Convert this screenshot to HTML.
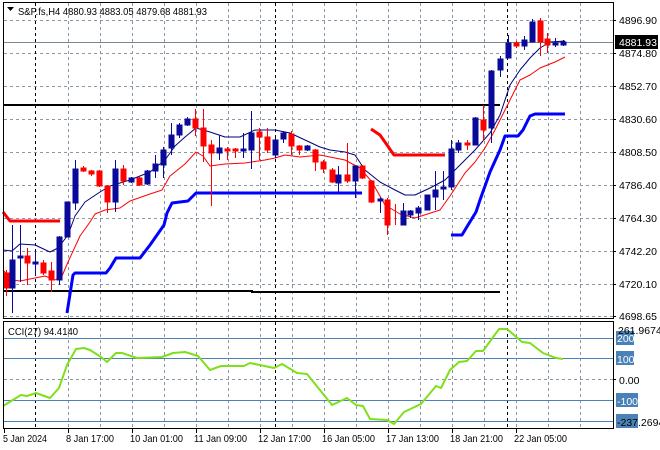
<!DOCTYPE html>
<html><head><meta charset="utf-8"><style>
html,body{margin:0;padding:0;background:#fff;}
svg{display:block;font-family:"Liberation Sans",sans-serif;font-size:10.5px;}
</style></head><body>
<svg width="660" height="450" viewBox="0 0 660 450" xmlns="http://www.w3.org/2000/svg">
<rect width="660" height="450" fill="#fff"/>
<g stroke="#8a96a3" stroke-width="1" stroke-dasharray="3,3" fill="none">
<path d="M4 20.5H613M4 53.5H613M4 86.5H613M4 119.5H613M4 152.5H613M4 185.5H613M4 218.5H613M4 251.5H613M4 284.5H613M4 316.5H613"/>
<path d="M4 379.5H613"/>
<path d="M68.5 3V318M100.5 3V318M132.5 3V318M164.5 3V318M196.5 3V318M228.5 3V318M260.5 3V318M292.5 3V318M324.5 3V318M356.5 3V318M388.5 3V318M420.5 3V318M452.5 3V318M484.5 3V318M516.5 3V318M548.5 3V318M580.5 3V318"/>
<path d="M68.5 322V428M100.5 322V428M132.5 322V428M164.5 322V428M196.5 322V428M228.5 322V428M260.5 322V428M292.5 322V428M324.5 322V428M356.5 322V428M388.5 322V428M420.5 322V428M452.5 322V428M484.5 322V428M516.5 322V428M548.5 322V428M580.5 322V428"/>
</g>
<g stroke="#000" stroke-width="1" stroke-dasharray="3,3">
<path d="M35.5 3V318M275.5 3V318M507.5 3V318M35.5 322V428M275.5 322V428M507.5 322V428"/>
</g>
<path d="M4 42.5H613" stroke="#7a8794" stroke-width="1"/>
<path d="M3 105H500" stroke="#000" stroke-width="2"/>
<path d="M3 291H252V292H500" stroke="#000" stroke-width="2" fill="none"/>
<g fill="none" stroke-linejoin="round">
<polyline stroke="#ff0000" stroke-width="3" points="3,212 10,221 60,221"/>
<polyline stroke="#ff0000" stroke-width="3" points="371,129 380,135 394,155 445,155"/>
<polyline stroke="#0000ff" stroke-width="3" points="67,313 73,275 75,273 106,273 110,268 116,258 140,258 150,245 164,225 167,213 172,203 188,201 196,193 362,193"/>
<polyline stroke="#0000ff" stroke-width="3" points="451,235 462,235 468,225 476,212 480,200 490,172 500,150 505,136 518,136 523,130 530,116 535,114 565,114"/>
<polyline stroke="#ff0000" stroke-width="1" points="3,270 12,280 20,281 35,278 45,276 55,280 62,276 68,262 80,236 90,222 95,214 105,210 120,208 130,201 150,194 162,190 170,176 185,164 196,152 203,156 210,166 225,164 245,163 265,160 275,158 285,155 300,157 320,155 345,160 360,168 372,182 385,205 400,214 415,218 440,210 450,196 465,173 475,162 485,148 495,130 505,110 510,100 520,80 530,75 540,68 555,62 565,57"/>
<polyline stroke="#000080" stroke-width="1" points="3,250 12,251 20,244 35,245 50,252 58,248 68,235 75,216 85,202 100,192 110,186 130,180 150,172 165,160 175,146 185,137 196,128 210,132 225,137 240,137 255,130 275,130 290,133 305,140 320,147 330,150 345,152 355,155 365,170 380,182 395,190 405,195 415,195 430,188 445,180 460,165 475,150 490,133 500,115 510,85 520,70 530,58 540,48 550,42 565,41"/>
</g>
<g stroke-width="1">
<g stroke="#ff0000" fill="#ff0000">
<path d="M6.5 270V296M27.5 248V285M43.5 260V275M51.5 262V292M83.5 166V172M91.5 170V176M99.5 170V187M107.5 185V213M123.5 165V185M139.5 177V186M195.5 109V136M203.5 109V162M211.5 140V206M227.5 147V160M235.5 148V158M259.5 128V160M267.5 128V153M291.5 131V155M299.5 145V155M315.5 149V171M323.5 160V173M332.5 168V183M347.5 143V183M362.5 165V179M371.5 180V203M387.5 198V235M395.5 204V225M467.5 140V150M483.5 105V141M516.5 41V48M540.5 18V56M547.5 33V53"/>
<rect x="4" y="273" width="5" height="15"/><rect x="25" y="256" width="5" height="7"/><rect x="41" y="263" width="5" height="10"/><rect x="49" y="271" width="5" height="9"/>
<rect x="81" y="168" width="5" height="3"/><rect x="89" y="171" width="5" height="3"/><rect x="97" y="171" width="5" height="15"/><rect x="105" y="186" width="5" height="16"/><rect x="121" y="169" width="5" height="12"/><rect x="137" y="178" width="5" height="7"/>
<rect x="193" y="119" width="5" height="9"/><rect x="201" y="128" width="5" height="18"/><rect x="209" y="145" width="5" height="8"/><rect x="225" y="149" width="5" height="2"/><rect x="233" y="149" width="5" height="2"/><rect x="257" y="132" width="5" height="5"/><rect x="265" y="137" width="5" height="13"/><rect x="289" y="134" width="5" height="12"/><rect x="297" y="146" width="5" height="4"/><rect x="313" y="150" width="5" height="12"/><rect x="321" y="162" width="5" height="7"/><rect x="330" y="170" width="5" height="12"/><rect x="345" y="175" width="5" height="6"/><rect x="360" y="166" width="5" height="12"/><rect x="369" y="181" width="5" height="21"/><rect x="385" y="200" width="5" height="25"/><rect x="465" y="143" width="5" height="2"/><rect x="481" y="120" width="5" height="10"/><rect x="514" y="43" width="5" height="3"/><rect x="538" y="21" width="5" height="21"/><rect x="545" y="39" width="5" height="6"/>
</g>
<g stroke="#0a0a9a" fill="#0a0a9a">
<path d="M12.5 225V313M20.5 225V282M35.5 250V275M59.5 236V285M75.5 160V210M115.5 160V212M131.5 177V183M147.5 170V185M155.5 155V178M163.5 147V178M171.5 123V155M179.5 123V138M187.5 117V126M219.5 135V160M243.5 133V158M251.5 111V169M275.5 138V158M283.5 131V143M307.5 145V151M338.5 166V192M355.5 166V198M380.5 197V213M403.5 203V225M410.5 210V218M418.5 206V220M427.5 195V210M435.5 171V210M443.5 171V200M451.5 140V190M458.5 140V153M475.5 117V145M491.5 70V143M500.5 56V77M508.5 35V58M524.5 36V50M532.5 19V42M555.5 38V47M563.5 40V46"/>
<rect x="10" y="260" width="5" height="28"/><rect x="18" y="256" width="5" height="2"/><rect x="33" y="262" width="5" height="2"/><rect x="57" y="237" width="5" height="43"/><rect x="65" y="202" width="5" height="35"/><rect x="73" y="169" width="5" height="34"/>
<rect x="113" y="169" width="5" height="33"/><rect x="129" y="178" width="5" height="4"/><rect x="145" y="171" width="5" height="13"/><rect x="153" y="164" width="5" height="7"/><rect x="161" y="150" width="5" height="15"/><rect x="169" y="135" width="5" height="13"/><rect x="177" y="125" width="5" height="10"/><rect x="185" y="119" width="5" height="6"/><rect x="217" y="148" width="5" height="5"/><rect x="241" y="149" width="5" height="2"/><rect x="249" y="133" width="5" height="17"/><rect x="273" y="140" width="5" height="15"/><rect x="281" y="133" width="5" height="6"/><rect x="305" y="146" width="5" height="4"/><rect x="336" y="175" width="5" height="8"/><rect x="353" y="166" width="5" height="15"/><rect x="378" y="199" width="5" height="2"/><rect x="401" y="211" width="5" height="14"/><rect x="408" y="211" width="5" height="4"/><rect x="416" y="208" width="5" height="5"/><rect x="425" y="195" width="5" height="15"/><rect x="433" y="190" width="5" height="7"/><rect x="441" y="187" width="5" height="2"/><rect x="449" y="149" width="5" height="38"/><rect x="456" y="143" width="5" height="7"/><rect x="473" y="118" width="5" height="27"/><rect x="489" y="71" width="5" height="57"/><rect x="498" y="59" width="5" height="11"/><rect x="506" y="43" width="5" height="15"/><rect x="522" y="40" width="5" height="6"/><rect x="530" y="22" width="5" height="20"/><rect x="553" y="43" width="5" height="2"/><rect x="561" y="42" width="5" height="3"/>
</g>
</g>
<g stroke="#4a82b8" stroke-width="1">
<path d="M4 338.5H613M4 358.5H613M4 400.5H613M4 421.5H613"/>
</g>
<polyline fill="none" stroke="#7fe01a" stroke-width="2" stroke-linejoin="round" points="3,406 21,395 27,396 36,393 50,398 59,388 67,365 76,349 84,348 90,350 101,357 107,362 116,353 122,353 137,358 162,357 173,353 185,352 198,356 210,370 221,366 244,366 250,363 274,368 282,364 297,373 307,374 332,405 347,398 356,405 363,406 370,419 387,420 394,424 404,412 421,404 436,386 441,388 450,370 459,362 467,361 476,351 483,351 499,329 507,329 522,342 530,343 543,353 556,358 563,359"/>
<g fill="none" stroke="#000" stroke-width="1">
<rect x="3.5" y="2.5" width="610" height="316"/>
<rect x="3.5" y="321.5" width="610" height="107"/>
</g>
<g stroke="#000"><path d="M613 20.5h3M613 53.5h3M613 86.5h3M613 119.5h3M613 152.5h3M613 185.5h3M613 218.5h3M613 251.5h3M613 284.5h3M613 316.5h3M613 379.5h3M4.5 429v4M68.5 429v4M132.5 429v4M196.5 429v4M260.5 429v4M324.5 429v4M388.5 429v4M452.5 429v4M516.5 429v4"/></g>
<path d="M7 7h7l-3.5 4z" fill="#000"/>
<text x="18" y="15" fill="#000" textLength="189" lengthAdjust="spacingAndGlyphs">S&amp;P.fs,H4  4880.93 4883.05 4879.68 4881.93</text>
<text x="8" y="335" fill="#000" textLength="70" lengthAdjust="spacingAndGlyphs">CCI(27) 94.4140</text>
<g fill="#000">
<text x="619" y="24">4896.90</text>
<text x="619" y="57">4874.80</text>
<text x="619" y="90">4852.70</text>
<text x="619" y="123">4830.60</text>
<text x="619" y="156">4808.50</text>
<text x="619" y="189">4786.40</text>
<text x="619" y="222">4764.30</text>
<text x="619" y="255">4742.20</text>
<text x="619" y="288">4720.10</text>
<text x="619" y="320">4698.65</text>
</g>
<rect x="615" y="35" width="43" height="14" fill="#000"/>
<text x="619" y="46" fill="#fff">4881.93</text>
<g fill="#4a82b8">
<rect x="616" y="331" width="18" height="14"/>
<rect x="616" y="351" width="18" height="14"/>
<rect x="616" y="393" width="22" height="14"/>
<rect x="616" y="414" width="22" height="14"/>
</g>
<text x="618" y="334" fill="#000">261.9674</text>
<g fill="#fff">
<text x="617" y="342">200</text>
<text x="617" y="363">100</text>
<text x="617" y="405">-100</text>
</g>
<text x="619" y="384" fill="#000">0.00</text>
<text x="617" y="426" fill="#000">-237.2694</text>
<g fill="#000">
<text x="3" y="442" textLength="44" lengthAdjust="spacingAndGlyphs">5 Jan 2024</text>
<text x="66" y="442" textLength="48" lengthAdjust="spacingAndGlyphs">8 Jan 17:00</text>
<text x="130" y="442" textLength="53" lengthAdjust="spacingAndGlyphs">10 Jan 01:00</text>
<text x="194" y="442" textLength="53" lengthAdjust="spacingAndGlyphs">11 Jan 09:00</text>
<text x="258" y="442" textLength="53" lengthAdjust="spacingAndGlyphs">12 Jan 17:00</text>
<text x="322" y="442" textLength="53" lengthAdjust="spacingAndGlyphs">16 Jan 05:00</text>
<text x="386" y="442" textLength="53" lengthAdjust="spacingAndGlyphs">17 Jan 13:00</text>
<text x="450" y="442" textLength="53" lengthAdjust="spacingAndGlyphs">18 Jan 21:00</text>
<text x="514" y="442" textLength="53" lengthAdjust="spacingAndGlyphs">22 Jan 05:00</text>
</g>
</svg>
</body></html>
